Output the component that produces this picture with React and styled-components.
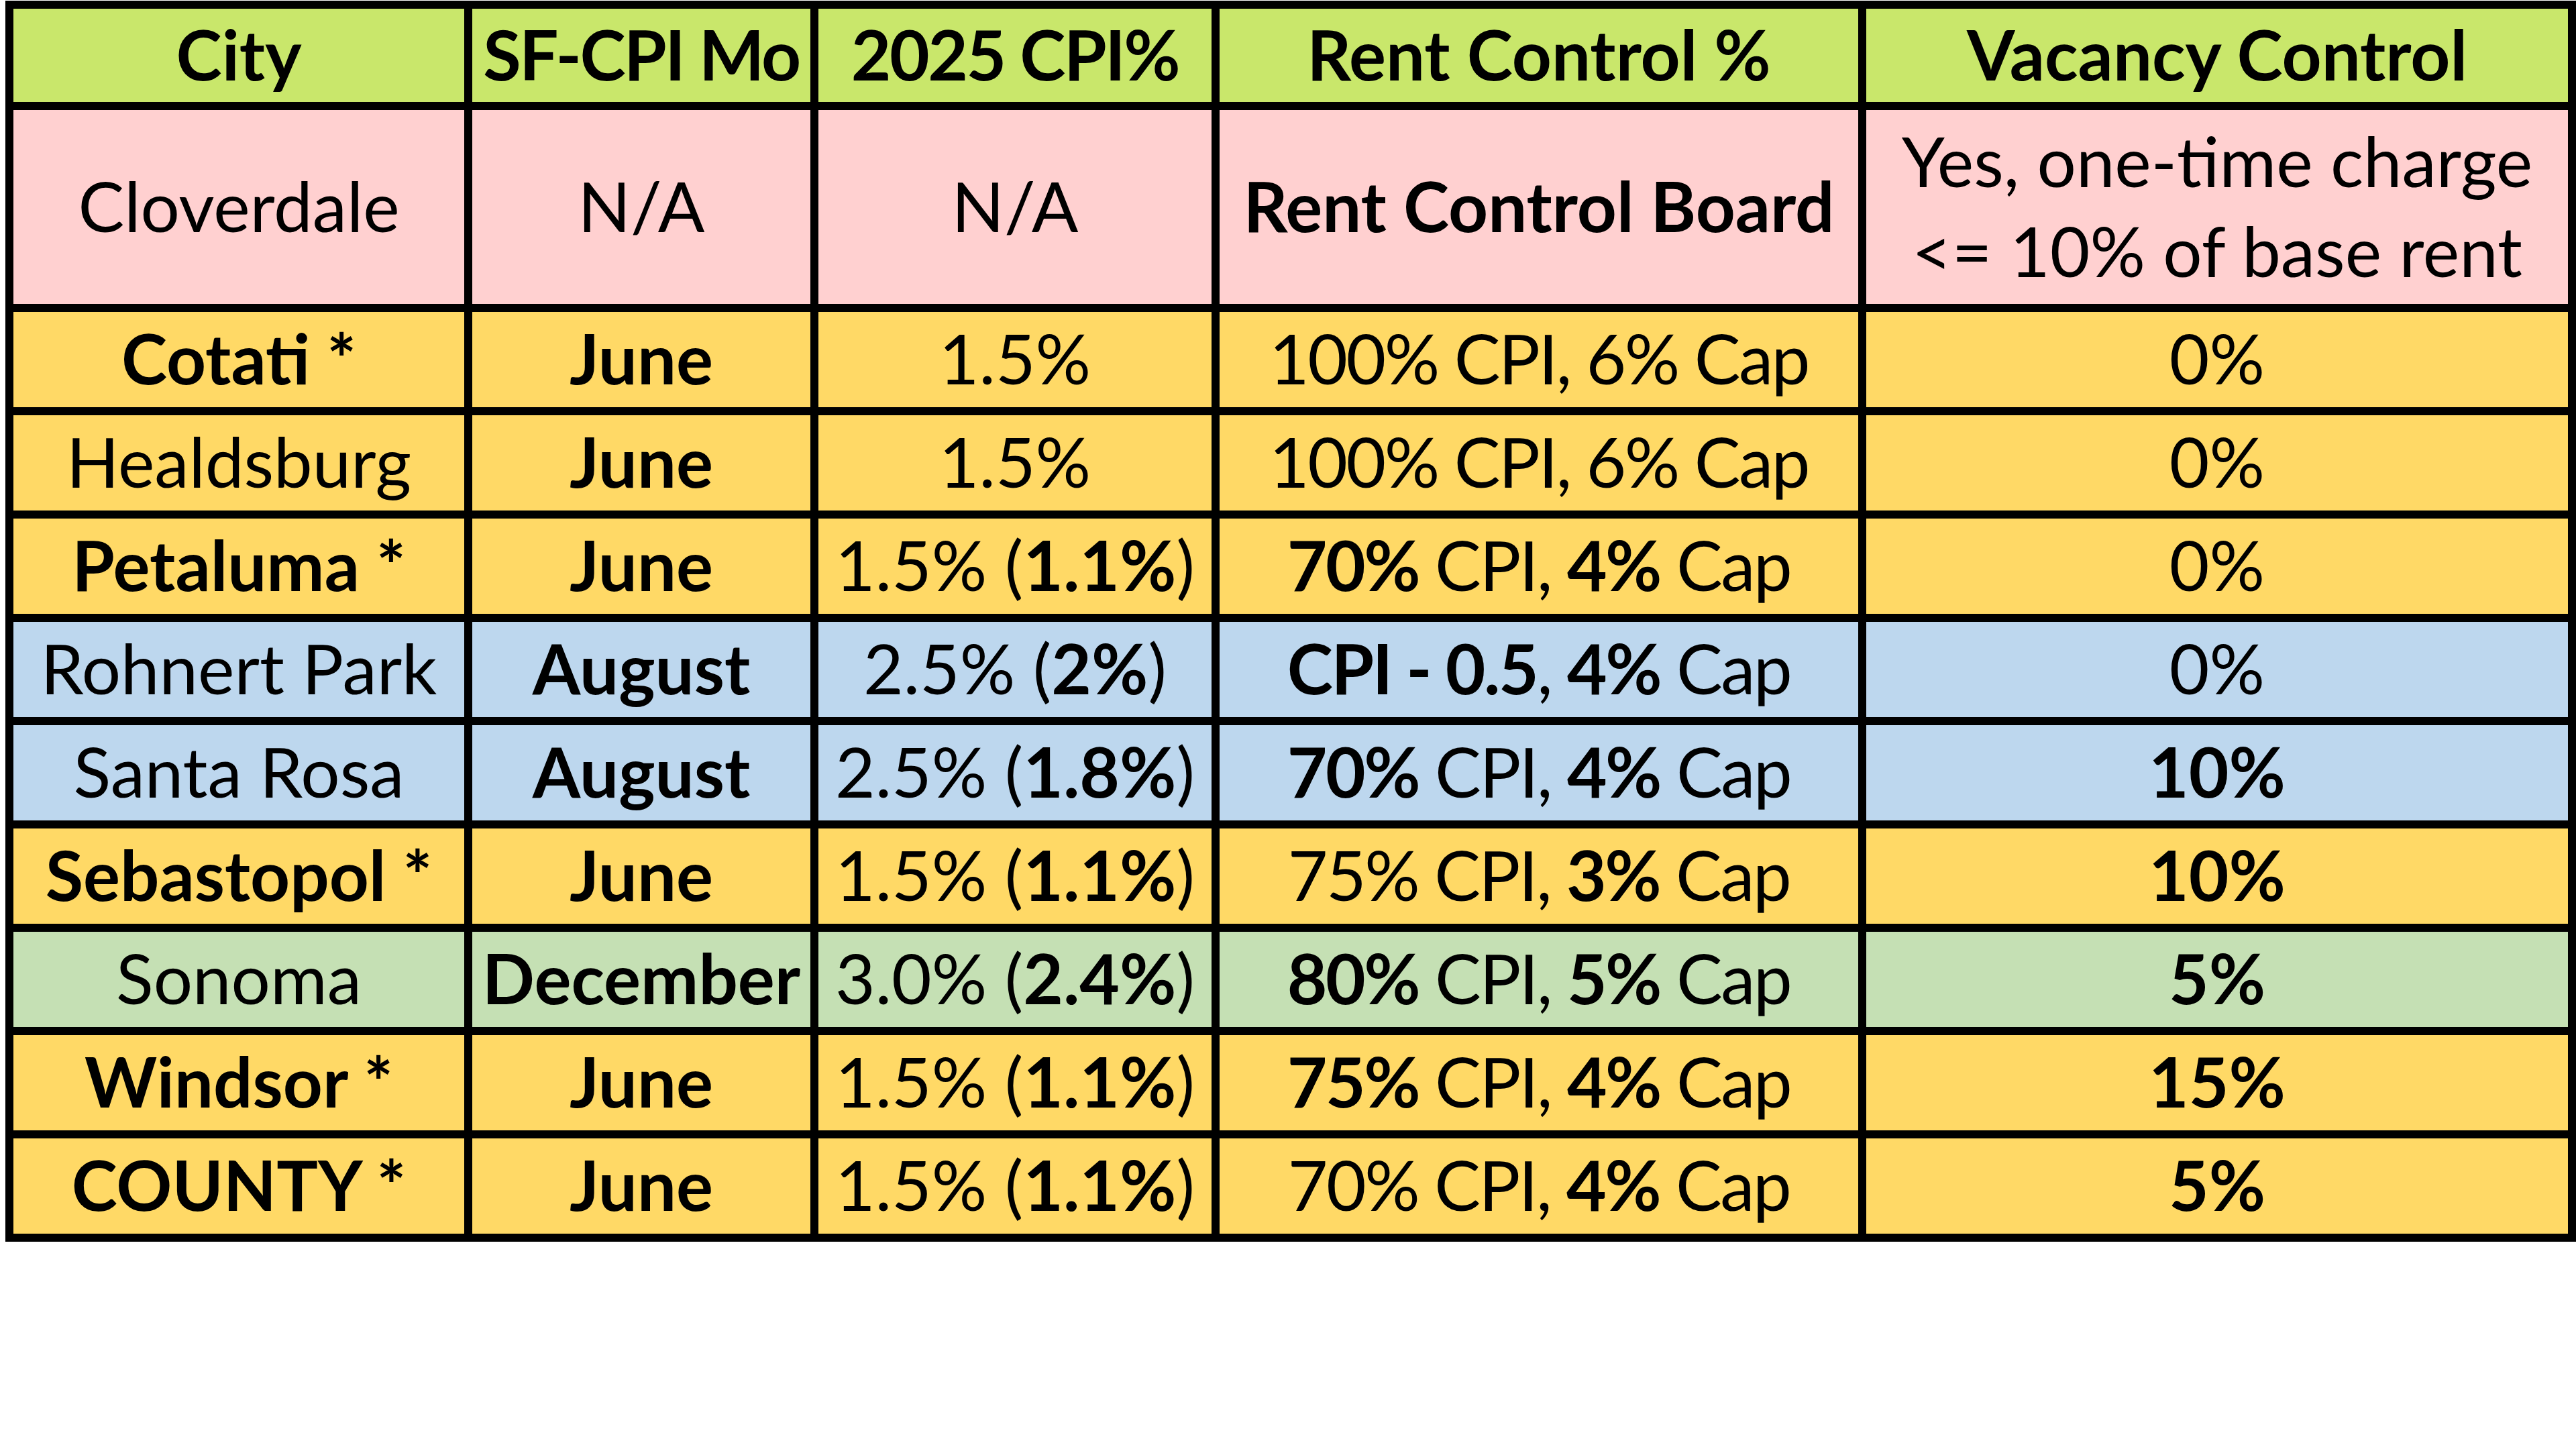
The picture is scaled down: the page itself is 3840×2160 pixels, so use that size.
import React from "react";
import styled, { createGlobalStyle } from "styled-components";

const Global = createGlobalStyle`
  html, body { margin: 0; padding: 0; background: #ffffff; }
  body { font-family: "Lato", "Open Sans", sans-serif; color: #000; }
`;

const TONES = {
  head: "#c9e76b",
  pink: "#ffd0d0",
  gold: "#ffd966",
  blue: "#bdd7ee",
  green: "#c5e0b4",
};

const Page = styled.div`
  padding: 1px 0 0 8px;
  width: 3832px;
`;

const Table = styled.div`
  display: grid;
  grid-template-columns: 672px 504px 586px 952px 1046px;
  grid-template-rows: 139px 289px repeat(9, 142px);
  gap: 12px;
  padding: 12px;
  background: #000;
`;

const Cell = styled.div`
  display: flex;
  align-items: center;
  justify-content: center;
  text-align: center;
  background: ${(p) => TONES[p.$tone]};
  font-size: 103px;
  font-weight: ${(p) => (p.$bold ? 700 : 400)};
  letter-spacing: ${(p) => (p.$tight ? "-2.5px" : "0")};
  line-height: 1.2;
  white-space: nowrap;
  overflow: visible;
`;

const Text = styled.span`
  display: inline-block;
  padding-bottom: ${(p) => (p.$multi ? "6px" : "4px")};
  line-height: ${(p) => (p.$multi ? "134px" : "1.2")};
`;

const B = styled.b`
  font-weight: 700;
`;

const rows = [
  {
    tone: "gold",
    city: "Cotati *",
    cityBold: true,
    month: "June",
    cpi: <>1.5%</>,
    rent: <>100% CPI, 6% Cap</>,
    vac: <>0%</>,
  },
  {
    tone: "gold",
    city: "Healdsburg",
    month: "June",
    cpi: <>1.5%</>,
    rent: <>100% CPI, 6% Cap</>,
    vac: <>0%</>,
  },
  {
    tone: "gold",
    city: "Petaluma *",
    cityBold: true,
    month: "June",
    cpi: <>1.5% (<B>1.1%</B>)</>,
    rent: <><B>70%</B> CPI, <B>4%</B> Cap</>,
    vac: <>0%</>,
  },
  {
    tone: "blue",
    city: "Rohnert Park",
    month: "August",
    cpi: <>2.5% (<B>2%</B>)</>,
    rent: <><B>CPI - 0.5</B>, <B>4%</B> Cap</>,
    vac: <>0%</>,
  },
  {
    tone: "blue",
    city: "Santa Rosa",
    month: "August",
    cpi: <>2.5% (<B>1.8%</B>)</>,
    rent: <><B>70%</B> CPI, <B>4%</B> Cap</>,
    vac: <B>10%</B>,
  },
  {
    tone: "gold",
    city: "Sebastopol *",
    cityBold: true,
    month: "June",
    cpi: <>1.5% (<B>1.1%</B>)</>,
    rent: <>75% CPI, <B>3%</B> Cap</>,
    vac: <B>10%</B>,
  },
  {
    tone: "green",
    city: "Sonoma",
    month: "December",
    cpi: <>3.0% (<B>2.4%</B>)</>,
    rent: <><B>80%</B> CPI, <B>5%</B> Cap</>,
    vac: <B>5%</B>,
  },
  {
    tone: "gold",
    city: "Windsor *",
    cityBold: true,
    month: "June",
    cpi: <>1.5% (<B>1.1%</B>)</>,
    rent: <><B>75%</B> CPI, <B>4%</B> Cap</>,
    vac: <B>15%</B>,
  },
  {
    tone: "gold",
    city: "COUNTY *",
    cityBold: true,
    month: "June",
    cpi: <>1.5% (<B>1.1%</B>)</>,
    rent: <>70% CPI, <B>4%</B> Cap</>,
    vac: <B>5%</B>,
  },
];

const headers = [
  { label: "City" },
  { label: "SF-CPI Mo", tight: true },
  { label: "2025 CPI%", tight: true },
  { label: "Rent Control %" },
  { label: "Vacancy Control" },
];

export default function App() {
  return (
    <>
      <Global />
      <Page>
        <Table>
          {headers.map((h) => (
            <Cell key={h.label} $tone="head" $bold $tight={h.tight}>
              <Text>{h.label}</Text>
            </Cell>
          ))}

          <Cell $tone="pink"><Text>Cloverdale</Text></Cell>
          <Cell $tone="pink"><Text>N/A</Text></Cell>
          <Cell $tone="pink"><Text>N/A</Text></Cell>
          <Cell $tone="pink" $bold><Text>Rent Control Board</Text></Cell>
          <Cell $tone="pink">
            <Text $multi>
              Yes, one-time charge
              <br />
              &lt;= 10% of base rent
            </Text>
          </Cell>

          {rows.map((r) => (
            <React.Fragment key={r.city}>
              <Cell $tone={r.tone} $bold={r.cityBold}><Text>{r.city}</Text></Cell>
              <Cell $tone={r.tone} $bold><Text>{r.month}</Text></Cell>
              <Cell $tone={r.tone}><Text>{r.cpi}</Text></Cell>
              <Cell $tone={r.tone} $tight><Text>{r.rent}</Text></Cell>
              <Cell $tone={r.tone}><Text>{r.vac}</Text></Cell>
            </React.Fragment>
          ))}
        </Table>
      </Page>
    </>
  );
}
